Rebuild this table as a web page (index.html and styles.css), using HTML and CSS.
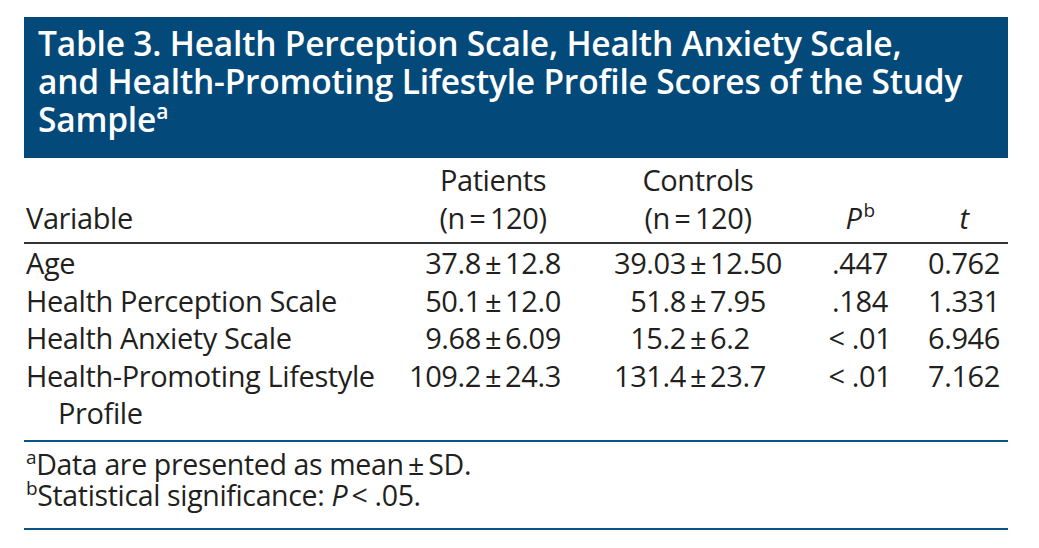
FILE: index.html
```html
<!DOCTYPE html>
<html lang="en">
<head>
<meta charset="utf-8">
<title>Table 3</title>
<link rel="stylesheet" href="styles.css">
</head>
<body>
<div class="page">
  <div class="title">Table 3. Health Perception Scale, Health Anxiety Scale,<br>and Health-Promoting Lifestyle Profile Scores of the Study<br>Sample<sup>a</sup></div>
  <table class="data">
    <colgroup>
      <col class="c-var"><col class="c-pat"><col class="c-con"><col class="c-p"><col class="c-t">
    </colgroup>
    <thead>
      <tr>
        <th class="var">Variable</th>
        <th>Patients<br>(n&#8201;=&#8201;120)</th>
        <th>Controls<br>(n&#8201;=&#8201;120)</th>
        <th><i>P</i><sup>b</sup></th>
        <th><i>t</i></th>
      </tr>
    </thead>
    <tbody>
      <tr>
        <td class="var">Age</td>
        <td><div class="pmv"><span class="l">37.8</span><span class="s">±</span><span class="r">12.8</span></div></td>
        <td><div class="pmv"><span class="l">39.03</span><span class="s">±</span><span class="r">12.50</span></div></td>
        <td class="num">.447</td>
        <td class="num">0.762</td>
      </tr>
      <tr>
        <td class="var">Health Perception Scale</td>
        <td><div class="pmv"><span class="l">50.1</span><span class="s">±</span><span class="r">12.0</span></div></td>
        <td><div class="pmv"><span class="l">51.8</span><span class="s">±</span><span class="r">7.95</span></div></td>
        <td class="num">.184</td>
        <td class="num">1.331</td>
      </tr>
      <tr>
        <td class="var">Health Anxiety Scale</td>
        <td><div class="pmv"><span class="l">9.68</span><span class="s">±</span><span class="r">6.09</span></div></td>
        <td><div class="pmv"><span class="l">15.2</span><span class="s">±</span><span class="r">6.2</span></div></td>
        <td class="num">&lt; .01</td>
        <td class="num">6.946</td>
      </tr>
      <tr class="last">
        <td class="var">Health-Promoting Lifestyle Profile</td>
        <td><div class="pmv"><span class="l">109.2</span><span class="s">±</span><span class="r">24.3</span></div></td>
        <td><div class="pmv"><span class="l">131.4</span><span class="s">±</span><span class="r">23.7</span></div></td>
        <td class="num">&lt; .01</td>
        <td class="num">7.162</td>
      </tr>
    </tbody>
  </table>
  <div class="notes">
    <p><sup>a</sup>Data are presented as mean&#8201;±&#8201;SD.</p>
    <p><sup>b</sup>Statistical significance: <i>P</i>&#8201;&lt; .05.</p>
  </div>
</div>
</body>
</html>
```
FILE: styles.css
```css
html, body {
  margin: 0;
  padding: 0;
  background: #ffffff;
}

body {
  font-family: "Open Sans", "Noto Sans", "Liberation Sans", sans-serif;
  color: #231f20;
}

.page {
  width: 984px;
  margin-left: 24px;
  padding-top: 17px;
}

.title {
  background: #03497a;
  color: #ffffff;
  font-weight: 600;
  font-size: 33.5px;
  line-height: 38px;
  letter-spacing: -0.2px;
  height: 141px;
  box-sizing: border-box;
  padding: 7px 14px 0 14px;
}

.title sup {
  font-size: 21px;
  line-height: 0;
  vertical-align: 13px;
}

.data {
  width: 100%;
  border-collapse: collapse;
  font-size: 29px;
  letter-spacing: -0.4px;
  border-bottom: 2px solid #0a5586;
}

.c-var { width: 366px; }
.c-pat { width: 206px; }
.c-con { width: 204px; }
.c-p { width: 120px; }
.c-t { width: 88px; }

.data th {
  font-weight: 400;
  line-height: 38px;
  text-align: center;
  vertical-align: bottom;
  padding: 3px 0 5px 0;
  border-bottom: 2px solid #333333;
}

.data th.var {
  text-align: left;
  padding-left: 2px;
}

.data th sup {
  font-size: 19px;
  line-height: 0;
  vertical-align: 12px;
  margin-left: 2px;
}

.data td {
  line-height: 37.5px;
  padding: 0;
  vertical-align: top;
}

.data td.var {
  padding-left: 34px;
  text-indent: -32px;
}

.data td.num {
  text-align: center;
}

.data tr.last td {
  padding-bottom: 8px;
}

.pmv {
  display: grid;
  grid-template-columns: 1fr auto 1fr;
}

.pmv .l { text-align: right; }
.pmv .r { text-align: left; }
.pmv .s { padding: 0 4px; }

.notes {
  font-size: 28.5px;
  line-height: 31px;
  letter-spacing: -0.35px;
  padding: 7px 0 17px 2px;
  border-bottom: 2px solid #0a5586;
}

.notes p {
  margin: 0;
}

.notes sup {
  font-size: 19px;
  line-height: 0;
  vertical-align: 11px;
}
```
